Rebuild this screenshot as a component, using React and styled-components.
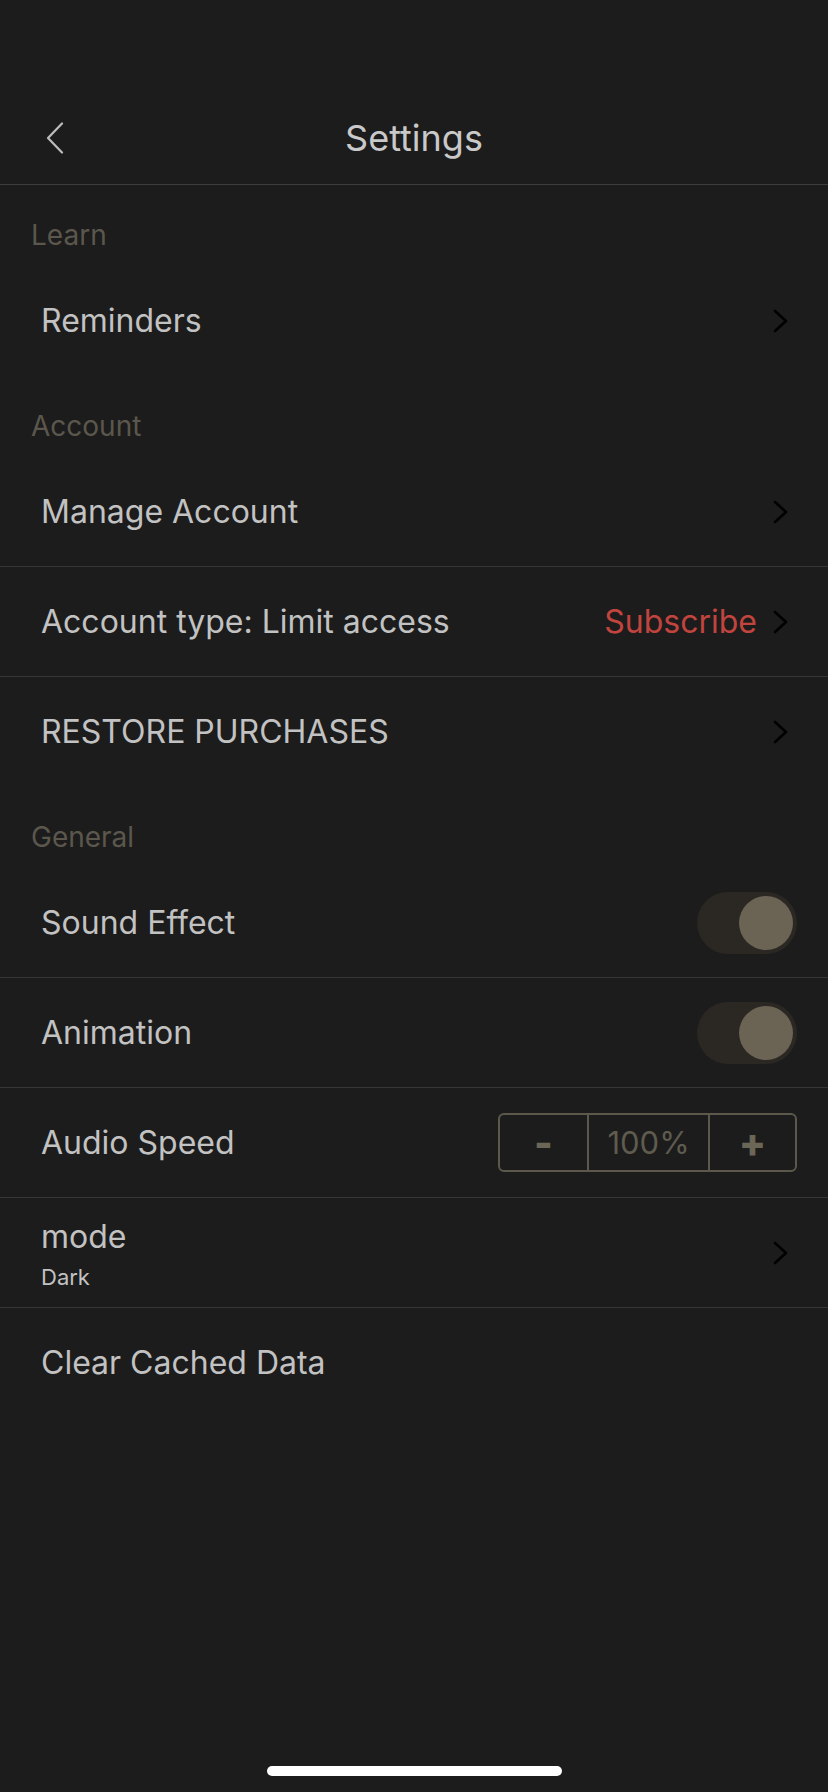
import React from 'react';
import styled, { createGlobalStyle } from 'styled-components';

const GlobalStyle = createGlobalStyle`
  * { box-sizing: border-box; }
  body {
    margin: 0;
    background: #1c1c1c;
    font-family: Inter, "Noto Sans", "Liberation Sans", sans-serif;
  }
`;

const Page = styled.div`
  width: 828px;
  min-height: 1792px;
  background: #1c1c1c;
  display: flex;
  flex-direction: column;
`;

const Header = styled.header`
  padding-top: 92px;
  border-bottom: 1px solid #3d3d3d;
`;

const Bar = styled.div`
  height: 92px;
  display: grid;
  grid-template-columns: 1fr auto 1fr;
  align-items: center;
`;

const BackButton = styled.button`
  justify-self: start;
  margin-left: 40px;
  width: 30px;
  height: 40px;
  padding: 0;
  border: none;
  background: none;
  display: flex;
  align-items: center;
  justify-content: center;
`;

const Title = styled.h1`
  margin: 0;
  font-size: 36px;
  font-weight: 400;
  color: #c9c9c9;
  line-height: 44px;
`;

const Content = styled.main`
  flex: 1;
`;

const SectionLabel = styled.div`
  padding: 37px 31px 18px;
  font-size: 28px;
  line-height: 26px;
  color: #5b574d;
`;

const Row = styled.div`
  height: 110px;
  padding: 0 31px 0 41px;
  display: flex;
  align-items: center;
  justify-content: space-between;
  border-bottom: ${({ $last }) => ($last ? 'none' : '1px solid #363636')};
`;

const Texts = styled.div`
  display: flex;
  flex-direction: column;
  gap: 8px;
  padding-top: 4px;
`;

const Label = styled.span`
  font-size: 32px;
  line-height: 36px;
  color: #c2c2c2;
`;

const SubLabel = styled.span`
  font-size: 22px;
  line-height: 28px;
  color: #c2c2c2;
`;

const Trailing = styled.div`
  display: flex;
  align-items: center;
  gap: 16px;
  margin-right: 9px;
`;

const Accent = styled.span`
  font-size: 32px;
  color: #c1443e;
`;

const Track = styled.div`
  width: 100px;
  height: 62px;
  border-radius: 31px;
  background: #2b2723;
  padding: 4px;
  display: flex;
  justify-content: ${({ $on }) => ($on ? 'flex-end' : 'flex-start')};
`;

const Knob = styled.div`
  width: 54px;
  height: 54px;
  border-radius: 50%;
  background: #6b6454;
`;

const Stepper = styled.div`
  display: grid;
  grid-template-columns: 87px 121px 87px;
  height: 59px;
  border: 2px solid #5c584c;
  border-radius: 6px;
`;

const StepCell = styled.div`
  display: flex;
  align-items: center;
  justify-content: center;
  color: ${({ $value }) => ($value ? '#5f5b4f' : '#6b6656')};
  font-size: ${({ $value }) => ($value ? '31px' : '40px')};
  font-weight: ${({ $value }) => ($value ? 400 : 800)};
  border-left: ${({ $divided }) => ($divided ? '2px solid #5c584c' : 'none')};
`;

const HomeArea = styled.div`
  display: flex;
  justify-content: center;
  padding-bottom: 16px;
`;

const HomeBar = styled.div`
  width: 295px;
  height: 10px;
  border-radius: 5px;
  background: #ffffff;
`;

const Chevron = () => (
  <svg width="15" height="24" viewBox="0 0 15 24">
    <path d="M2 2 L13 12 L2 22" fill="none" stroke="#000" strokeWidth="2.6" strokeLinecap="round" strokeLinejoin="round" />
  </svg>
);

const BackIcon = () => (
  <svg width="20" height="32" viewBox="0 0 20 32">
    <path d="M17 1.5 L3 16 L17 30.5" fill="none" stroke="#bdbdbd" strokeWidth="2.2" strokeLinecap="round" strokeLinejoin="round" />
  </svg>
);

const Toggle = ({ on }) => (
  <Track $on={on}>
    <Knob />
  </Track>
);

const App = () => {
  return (
    <Page>
      <GlobalStyle />
      <Header>
        <Bar>
          <BackButton aria-label="Back">
            <BackIcon />
          </BackButton>
          <Title>Settings</Title>
          <div />
        </Bar>
      </Header>

      <Content>
        <SectionLabel>Learn</SectionLabel>
        <Row $last>
          <Label>Reminders</Label>
          <Trailing><Chevron /></Trailing>
        </Row>

        <SectionLabel>Account</SectionLabel>
        <Row>
          <Label>Manage Account</Label>
          <Trailing><Chevron /></Trailing>
        </Row>
        <Row>
          <Label>Account type: Limit access</Label>
          <Trailing>
            <Accent>Subscribe</Accent>
            <Chevron />
          </Trailing>
        </Row>
        <Row $last>
          <Label>RESTORE PURCHASES</Label>
          <Trailing><Chevron /></Trailing>
        </Row>

        <SectionLabel>General</SectionLabel>
        <Row>
          <Label>Sound Effect</Label>
          <Toggle on />
        </Row>
        <Row>
          <Label>Animation</Label>
          <Toggle on />
        </Row>
        <Row>
          <Label>Audio Speed</Label>
          <Stepper>
            <StepCell>-</StepCell>
            <StepCell $value $divided>100%</StepCell>
            <StepCell $divided>+</StepCell>
          </Stepper>
        </Row>
        <Row>
          <Texts>
            <Label>mode</Label>
            <SubLabel>Dark</SubLabel>
          </Texts>
          <Trailing><Chevron /></Trailing>
        </Row>
        <Row $last>
          <Label>Clear Cached Data</Label>
        </Row>
      </Content>

      <HomeArea>
        <HomeBar />
      </HomeArea>
    </Page>
  );
};

export default App;
